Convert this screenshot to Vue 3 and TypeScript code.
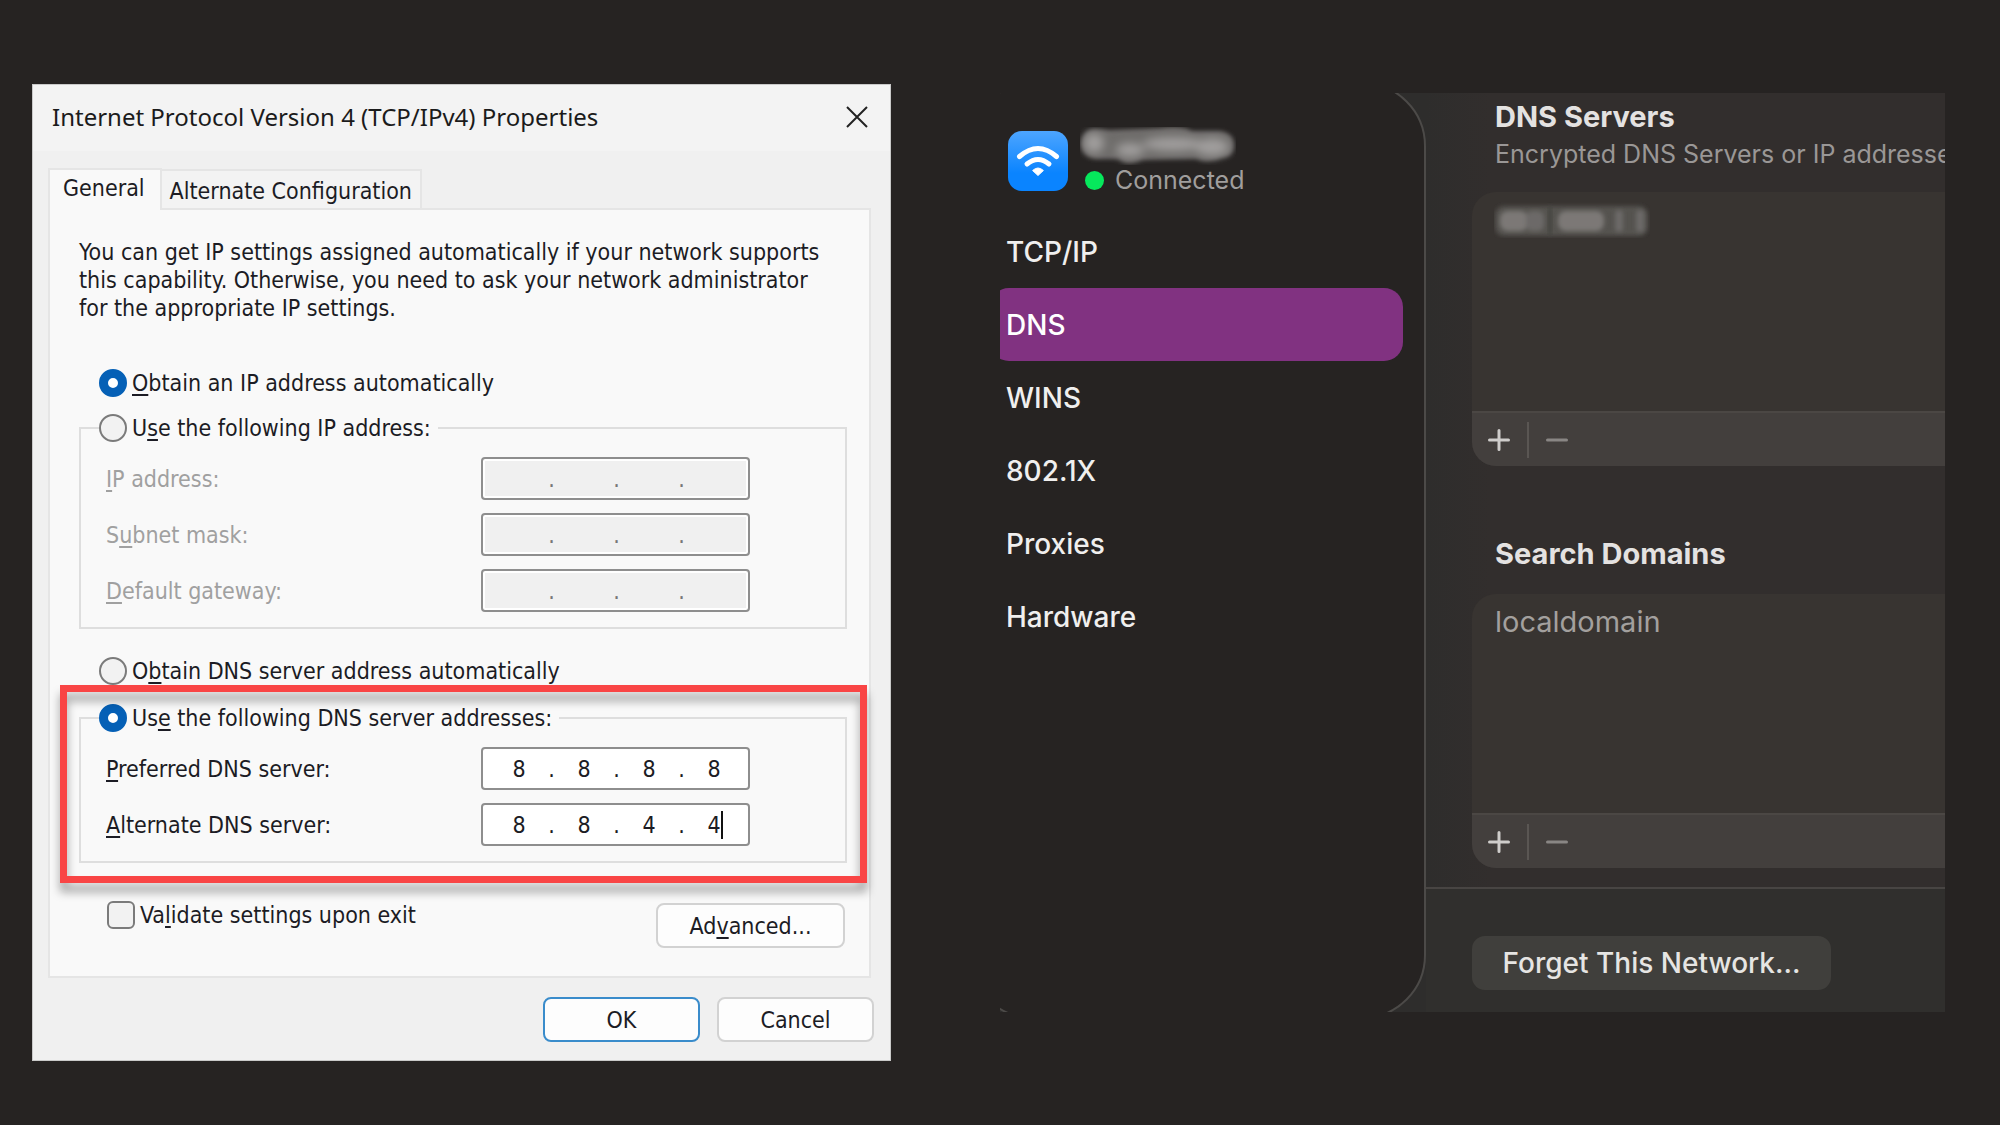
<script setup lang="ts">
import { ref } from 'vue'

interface Caption {
  before: string
  key: string
  after: string
}

interface AddressField {
  id: string
  caption: Caption
  octets: string[]
  caret?: boolean
}

const cap = (before: string, key: string, after: string): Caption => ({ before, key, after })

const ipMode = ref('auto')
const dnsMode = ref('manual')
const validate = ref(false)
const activeSection = ref('DNS')

const ipFields: AddressField[] = [
  { id: 'ip', caption: cap('', 'I', 'P address:'), octets: ['', '', '', ''] },
  { id: 'mask', caption: cap('S', 'u', 'bnet mask:'), octets: ['', '', '', ''] },
  { id: 'gateway', caption: cap('', 'D', 'efault gateway:'), octets: ['', '', '', ''] },
]

const dnsFields: AddressField[] = [
  { id: 'preferred', caption: cap('', 'P', 'referred DNS server:'), octets: ['8', '8', '8', '8'] },
  { id: 'alternate', caption: cap('', 'A', 'lternate DNS server:'), octets: ['8', '8', '4', '4'], caret: true },
]

const groups = [
  {
    name: 'ip-mode',
    model: ipMode,
    auto: cap('', 'O', 'btain an IP address automatically'),
    manual: cap('U', 's', 'e the following IP address:'),
    fields: ipFields,
    disabled: true,
  },
  {
    name: 'dns-mode',
    model: dnsMode,
    auto: cap('O', 'b', 'tain DNS server address automatically'),
    manual: cap('Us', 'e', ' the following DNS server addresses:'),
    fields: dnsFields,
    disabled: false,
  },
]

const sections = ['TCP/IP', 'DNS', 'WINS', '802.1X', 'Proxies', 'Hardware']
</script>

<template>
  <main class="page">
    <section class="dialog" aria-label="TCP/IPv4 Properties">
      <header class="titlebar">
        <h1>Internet Protocol Version 4 (TCP/IPv4) Properties</h1>
        <button class="close" aria-label="Close">
          <svg viewBox="0 0 24 24" width="24" height="24">
            <path d="M2 2 L22 22 M22 2 L2 22" stroke="#222" stroke-width="2" fill="none" />
          </svg>
        </button>
      </header>

      <div class="dialog-body">
        <div class="tabs" role="tablist">
          <button class="tab active" role="tab">General</button>
          <button class="tab" role="tab">Alternate Configuration</button>
        </div>

        <div class="panel">
          <p class="intro">
            You can get IP settings assigned automatically if your network supports<br />
            this capability. Otherwise, you need to ask your network administrator<br />
            for the appropriate IP settings.
          </p>

          <div v-for="g in groups" :key="g.name" class="group">
            <label class="choice">
              <input v-model="g.model.value" type="radio" :name="g.name" value="auto" />
              <span>{{ g.auto.before }}<u>{{ g.auto.key }}</u>{{ g.auto.after }}</span>
            </label>
            <fieldset :class="{ highlighted: !g.disabled }">
              <legend>
                <label class="choice">
                  <input v-model="g.model.value" type="radio" :name="g.name" value="manual" />
                  <span>{{ g.manual.before }}<u>{{ g.manual.key }}</u>{{ g.manual.after }}</span>
                </label>
              </legend>
              <div v-for="f in g.fields" :key="f.id" class="field" :class="{ disabled: g.disabled }">
                <label :for="f.id">{{ f.caption.before }}<u>{{ f.caption.key }}</u>{{ f.caption.after }}</label>
                <div class="address">
                  <template v-for="(o, i) in f.octets" :key="i">
                    <span v-if="i > 0" class="dot">.</span>
                    <span class="octet">
                      <input
                        :id="i === 0 ? f.id : undefined"
                        type="text"
                        :value="o"
                        :disabled="g.disabled"
                        :aria-label="`Octet ${i + 1}`"
                      />
                      <i v-if="f.caret && i === 3" class="caret"></i>
                    </span>
                  </template>
                </div>
              </div>
            </fieldset>
          </div>

          <div class="panel-foot">
            <label class="choice check">
              <input v-model="validate" type="checkbox" />
              <span>Va<u>l</u>idate settings upon exit</span>
            </label>
            <button class="btn wide">Ad<u>v</u>anced...</button>
          </div>
        </div>

        <footer class="actions">
          <button class="btn primary">OK</button>
          <button class="btn">Cancel</button>
        </footer>
      </div>
    </section>

    <section class="mac" aria-label="Network details">
      <aside class="sidebar">
        <div class="network">
          <svg class="wifi" viewBox="0 0 60 60" width="60" height="60">
            <defs>
              <linearGradient id="wifi-bg" x1="0" y1="0" x2="0" y2="1">
                <stop offset="0" stop-color="#4da5ff" />
                <stop offset="0.7" stop-color="#0a84ff" />
              </linearGradient>
            </defs>
            <rect width="60" height="60" rx="14" fill="url(#wifi-bg)" />
            <path d="M11.500 25.500 Q30 9.500 48.500 25.500" stroke="#fff" stroke-width="5" stroke-linecap="round" fill="none" />
            <path d="M19 33 Q30 24 41 33" stroke="#fff" stroke-width="5" stroke-linecap="round" fill="none" />
            <path d="M30 44.500 L24.600 39.500 Q30 34.500 35.400 39.500 Z" fill="#fff" stroke="#fff" stroke-width="1" stroke-linejoin="round" />
          </svg>
          <div class="network-info">
            <svg class="name" viewBox="0 0 156 38" width="156" height="38" aria-hidden="true">
              <defs>
                <filter id="soft" x="-10%" y="-20%" width="120%" height="140%"><feGaussianBlur stdDeviation="2" /></filter>
                <filter id="softer" x="-50%" y="-50%" width="200%" height="200%"><feGaussianBlur stdDeviation="5" /></filter>
              </defs>
              <path
                filter="url(#soft)"
                fill="#6e6c6b"
                d="M14 2 Q22 2 30 3 L80 1 Q102 -2 112 4 L140 4 Q154 6 154 18 Q154 30 142 31 Q128 37 116 32 L62 33 Q48 40 38 32 L16 32 Q2 30 1 17 Q2 3 14 2Z"
              />
              <g filter="url(#softer)" fill="#a09e9d">
                <circle cx="14" cy="16" r="10" />
                <ellipse cx="50" cy="23" rx="14" ry="7" />
                <ellipse cx="93" cy="17" rx="30" ry="7" />
                <ellipse cx="132" cy="20" rx="17" ry="9" />
              </g>
            </svg>
            <div class="status"><span class="led"></span>Connected</div>
          </div>
        </div>
        <nav>
          <button
            v-for="s in sections"
            :key="s"
            :class="{ selected: s === activeSection }"
            @click="activeSection = s"
          >
            {{ s }}
          </button>
        </nav>
      </aside>

      <div class="detail">
        <div class="detail-body">
          <h2>DNS Servers</h2>
          <p class="hint">Encrypted DNS Servers or IP addresses</p>
          <div class="card">
            <div class="list">
              <svg class="redacted" viewBox="0 0 156 36" width="156" height="36" aria-hidden="true">
                <rect x="1" y="4" width="153" height="30" rx="9" fill="#55524f" filter="url(#soft)" />
                <g filter="url(#soft)" fill="#7b7876">
                  <rect x="6" y="9" width="28" height="20" rx="8" />
                  <rect x="32" y="9" width="18" height="20" rx="6" fill="#6c6967" />
                  <rect x="64" y="9" width="46" height="20" rx="8" />
                  <rect x="121" y="8" width="8" height="22" rx="4" fill="#6c6967" />
                  <rect x="142" y="8" width="8" height="22" rx="4" fill="#6c6967" />
                </g>
                <rect x="54" y="4" width="4" height="30" fill="#454240" filter="url(#soft)" />
              </svg>
            </div>
            <div class="toolbar">
              <button aria-label="Add DNS server"><svg viewBox="0 0 22 22" width="22" height="22"><path d="M1.500 11 H20.500 M11 1.500 V20.500" stroke="#cfcdcb" stroke-width="3" stroke-linecap="round" /></svg></button>
              <span class="split"></span>
              <button aria-label="Remove DNS server"><svg viewBox="0 0 22 22" width="22" height="22"><path d="M1.500 11 H20.500" stroke="#898684" stroke-width="3" stroke-linecap="round" /></svg></button>
            </div>
          </div>

          <h2 class="second">Search Domains</h2>
          <div class="card">
            <div class="list tall">localdomain</div>
            <div class="toolbar">
              <button aria-label="Add search domain"><svg viewBox="0 0 22 22" width="22" height="22"><path d="M1.500 11 H20.500 M11 1.500 V20.500" stroke="#cfcdcb" stroke-width="3" stroke-linecap="round" /></svg></button>
              <span class="split"></span>
              <button aria-label="Remove search domain"><svg viewBox="0 0 22 22" width="22" height="22"><path d="M1.500 11 H20.500" stroke="#898684" stroke-width="3" stroke-linecap="round" /></svg></button>
            </div>
          </div>
        </div>
        <footer class="detail-foot">
          <button class="forget">Forget This Network...</button>
        </footer>
      </div>
    </section>
  </main>
</template>

<style>
body {
  margin: 0;
  background: #262322;
}
</style>

<style scoped>
* {
  box-sizing: border-box;
}

button,
input {
  font: inherit;
  color: inherit;
  margin: 0;
}

button {
  border: 0;
  background: none;
  padding: 0;
}

h1,
h2,
p {
  margin: 0;
}

u {
  text-decoration-thickness: 2px;
  text-underline-offset: 3px;
  text-decoration-skip-ink: none;
}

.page {
  display: grid;
  grid-template-columns: 859fr 945fr;
  column-gap: 109px;
  align-items: start;
  padding: 84px 55px 64px 32px;
}

/* Windows dialog */
.dialog {
  background: #f0f0f0;
  border: 1px solid #c9c9c9;
  color: #1c1c24;
  font: 23px/28px "DejaVu Sans Condensed", "DejaVu Sans", sans-serif;
}

.titlebar {
  display: flex;
  align-items: center;
  justify-content: space-between;
  height: 66px;
  padding: 0 21px 2px 19px;
  background: #f3f3f3;
}

.titlebar h1 {
  font: 400 24px/32px "Noto Sans", sans-serif;
  color: #1b1b1b;
}

.close {
  display: flex;
}

.dialog-body {
  padding: 17px 16px 18px 15px;
}

.tabs {
  display: flex;
  align-items: flex-end;
}

.tab {
  height: 39px;
  padding: 2px 8px 0;
  border: 2px solid #e5e5e5;
  border-left: 0;
  border-bottom: 0;
  background: #f3f3f3;
}

.tab.active {
  position: relative;
  height: 42px;
  padding: 0 15px 4px 13px;
  margin-bottom: -2px;
  border-left: 2px solid #e5e5e5;
  background: #f9f9f9;
}

.panel {
  margin-right: 3px;
  padding: 28px 22px 28px 29px;
  border: 2px solid #e5e5e5;
  background: #f9f9f9;
}

.intro {
  white-space: nowrap;
  margin-bottom: 47px;
}

.group + .group {
  margin-top: 28px;
}

.choice {
  display: flex;
  align-items: center;
  gap: 5px;
  height: 28px;
}

.group > .choice {
  padding-left: 20px;
}

.choice input {
  appearance: none;
  flex: none;
  width: 28px;
  height: 28px;
  border: 2px solid #7b7b7b;
  border-radius: 50%;
  background: #f2f2f2;
}

.choice input:checked {
  border: 9px solid #0560b6;
  background: #fff;
}

.choice.check input {
  border-radius: 6px;
}

fieldset {
  position: relative;
  display: flex;
  flex-direction: column;
  gap: 13px;
  min-width: 0;
  margin: 17px 0 0;
  padding: 15px 95px 15px 25px;
  border: 2px solid #dedede;
}

fieldset.highlighted {
  margin-top: 19px;
}

legend {
  margin-left: -7px;
  padding: 0 7px 0 0;
}

/* Red call-out frame around the DNS group */
fieldset.highlighted::after {
  content: "";
  position: absolute;
  inset: -47px -22px -22px -21px;
  border: 7px solid #f94545;
  filter: drop-shadow(0 9px 5px rgba(0, 0, 0, 0.35));
  pointer-events: none;
}

.field {
  display: flex;
  align-items: center;
  justify-content: space-between;
}

.field.disabled {
  color: #a0a0a0;
}

.address {
  display: flex;
  align-items: center;
  flex: 0 0 269px;
  height: 43px;
  padding: 0 9px 0 11px;
  border: 2px solid #8e8e8e;
  border-radius: 4px;
  background: #fff;
}

.disabled .address {
  background: #f0f0f0;
  box-shadow: inset 0 0 0 2px #fff;
  color: #777;
}

.octet {
  position: relative;
  flex: 1;
  min-width: 0;
}

.octet input {
  display: block;
  width: 100%;
  height: 28px;
  padding: 0;
  border: 0;
  background: none;
  text-align: center;
}

.dot {
  width: 15px;
  text-align: center;
}

.caret {
  position: absolute;
  top: 0;
  left: calc(50% + 7px);
  width: 2px;
  height: 28px;
  background: #111;
}

.panel-foot {
  display: flex;
  justify-content: space-between;
  height: 47px;
  margin-top: 38px;
  padding: 0 2px 0 28px;
}

.btn {
  width: 157px;
  height: 45px;
  border: 2px solid #d2d2d2;
  border-radius: 8px;
  background: #fdfdfd;
}

.btn.wide {
  align-self: flex-end;
  width: 189px;
}

.btn.primary {
  border-color: #3a8ccb;
}

.actions {
  display: flex;
  justify-content: flex-end;
  gap: 17px;
  margin-top: 19px;
}

/* macOS network pane */
.mac {
  display: grid;
  grid-template-columns: 426fr 519fr;
  margin-top: 9px;
  height: 919px;
  overflow: hidden;
  background: linear-gradient(90deg, #2e2d2c 45%, #322e2d 52%);
  font: 500 28px/36px Inter, sans-serif;
  color: #f0efee;
}

.sidebar {
  margin: -11px 0 -7px -31px;
  padding: 43px 21px 0 19px;
  border: 2px solid #4c4a48;
  border-radius: 64px;
  background: #262322;
}

.network {
  display: flex;
  align-items: center;
  gap: 12px;
  padding-left: 18px;
}

.wifi,
.name {
  display: block;
}

.status {
  display: flex;
  align-items: center;
  gap: 11px;
  height: 30px;
  padding-left: 5px;
  font-size: 25px;
  font-weight: 400;
  color: #a09e9d;
}

.led {
  width: 19px;
  height: 19px;
  border-radius: 50%;
  background: #06e85c;
}

nav {
  display: flex;
  flex-direction: column;
  margin-top: 20px;
}

nav button {
  height: 73px;
  padding: 1px 0 0 16px;
  border-radius: 19px;
  text-align: left;
}

nav button.selected {
  background: #813281;
  color: #fff;
}

.detail {
  display: flex;
  flex-direction: column;
  min-width: 0;
}

.detail-body {
  padding: 6px 0 19px 46px;
}

h2 {
  padding-left: 23px;
  font-size: 29px;
  line-height: 36px;
  font-weight: 700;
  color: #e4e2e1;
}

.hint {
  padding-left: 23px;
  overflow: hidden;
  white-space: nowrap;
  font-size: 25px;
  font-weight: 400;
  line-height: 38px;
  color: #9a9796;
}

.card {
  margin-top: 19px;
  overflow: hidden;
  border-radius: 24px 0 0 24px;
  background: #383431;
}

.list {
  height: 219px;
  padding: 10px 22px;
  font-size: 29px;
  font-weight: 400;
  color: #a3a09e;
}

.list.tall {
  padding-left: 23px;
}

.redacted {
  display: block;
}

.toolbar {
  display: flex;
  align-items: center;
  height: 55px;
  padding: 0 16px;
  border-top: 2px solid #4b4744;
  background: #433f3d;
}

.toolbar button {
  display: flex;
}

.split {
  width: 2px;
  height: 36px;
  margin: 0 17px;
  background: #5a5653;
}

h2.second {
  margin-top: 70px;
}

h2.second + .card {
  margin-top: 22px;
}

.detail-foot {
  flex: 1;
  padding: 47px 0 0 46px;
  border-top: 2px solid #484543;
  background: #302f2d;
}

.forget {
  width: 359px;
  height: 54px;
  border-radius: 13px;
  background: #403f3c;
  color: #e6e5e3;
}
</style>
